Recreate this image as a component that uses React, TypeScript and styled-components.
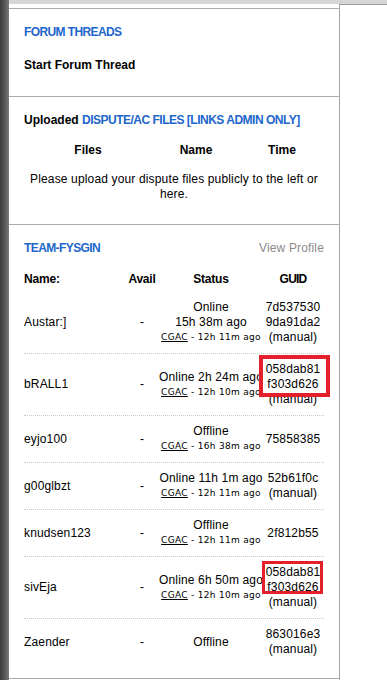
import styled, { createGlobalStyle } from 'styled-components';

const GlobalStyle = createGlobalStyle`
  body {
    margin: 0;
    background: #fff;
    font-family: 'Liberation Sans', Arial, sans-serif;
    font-size: 12px;
    letter-spacing: 0.15px;
    color: #000;
  }
`;

type Member = {
  name: string;
  status: string[];
  cgac?: string;
  guid: string[];
  marked?: { t: number; r: number; b: number; l: number; w: number };
  manual?: boolean;
};

const members: Member[] = [
  { name: 'Austar:]', status: ['Online', '15h 38m ago'], cgac: '12h 11m ago', guid: ['7d537530', '9da91da2'], manual: true },
  {
    name: 'bRALL1',
    status: ['Online 2h 24m ago'],
    cgac: '12h 10m ago',
    guid: ['058dab81', 'f303d626'],
    manual: true,
    marked: { t: 7, r: 10, b: 5, l: 7, w: 4 },
  },
  { name: 'eyjo100', status: ['Offline'], cgac: '16h 38m ago', guid: ['75858385'] },
  { name: 'g00glbzt', status: ['Online 11h 1m ago'], cgac: '12h 11m ago', guid: ['52b61f0c'], manual: true },
  { name: 'knudsen123', status: ['Offline'], cgac: '12h 11m ago', guid: ['2f812b55'] },
  {
    name: 'sivEja',
    status: ['Online 6h 50m ago'],
    cgac: '12h 10m ago',
    guid: ['058dab81', 'f303d626'],
    manual: true,
    marked: { t: 4, r: 3, b: -1, l: 4, w: 3 },
  },
  { name: 'Zaender', status: ['Offline'], guid: ['863016e3'], manual: true },
];

function App() {
  return (
    <Page>
      <GlobalStyle />
      <Strip />
      <Main>
        <TopBar />
        <Body>
          <PanelColumn>
            <Panel>
              <Section $pt={16} $pb={23}>
                <Title>FORUM THREADS</Title>
                <StartThread>Start Forum Thread</StartThread>
              </Section>

              <Section $pt={16} $pb={22}>
                <Heading>
                  Uploaded <Link>DISPUTE/AC FILES [LINKS ADMIN ONLY]</Link>
                </Heading>
                <FilesHead>
                  <span>Files</span>
                  <span>Name</span>
                  <span>Time</span>
                </FilesHead>
                <Notice>Please upload your dispute files publicly to the left or here.</Notice>
              </Section>

              <Section $pt={16} $pb={13} $last>
                <TeamBar>
                  <Title>TEAM-FYSGIN</Title>
                  <ViewProfile>View Profile</ViewProfile>
                </TeamBar>
                <HeadRow>
                  <NameCell>Name:</NameCell>
                  <Center>Avail</Center>
                  <Center>Status</Center>
                  <Center $caps>GUID</Center>
                </HeadRow>
                {members.map((m, i) => (
                  <Row key={m.name} $last={i === members.length - 1}>
                    <NameCell>{m.name}</NameCell>
                    <Center>-</Center>
                    <Stack>
                      {m.status.map((s) => (
                        <Line key={s}>{s}</Line>
                      ))}
                      {m.cgac && (
                        <Small>
                          <u>CGAC</u> - {m.cgac}
                        </Small>
                      )}
                    </Stack>
                    <Stack>
                      {m.marked ? (
                        <Mark $box={m.marked}>
                          {m.guid.map((g) => (
                            <Line key={g}>{g}</Line>
                          ))}
                        </Mark>
                      ) : (
                        m.guid.map((g) => <Line key={g}>{g}</Line>)
                      )}
                      {m.manual && <Line>(manual)</Line>}
                    </Stack>
                  </Row>
                ))}
              </Section>
            </Panel>
          </PanelColumn>
          <Outside />
        </Body>
      </Main>
    </Page>
  );
}

export default App;

const Page = styled.div`
  display: flex;
  min-height: 680px;
`;

const Strip = styled.div`
  width: 9px;
  flex-shrink: 0;
  background: linear-gradient(to right, #3b3b3b, #5a5a5a 60%, #7c7c7c);
`;

const Main = styled.div`
  flex: 1;
  display: flex;
  flex-direction: column;
`;

const TopBar = styled.div`
  height: 4px;
  background: #d6d6d6;
`;

const Body = styled.div`
  display: flex;
  flex: 1;
`;

const PanelColumn = styled.div`
  width: 330px;
  padding-top: 4px;
  border-right: 1px solid #a4a4a4;
`;

const Outside = styled.div`
  flex: 1;
  border-top: 1px solid #9a9a9a;
`;

const Panel = styled.div`
  border-top: 1px solid #ababab;
  border-bottom: 1px solid #ababab;
`;

const Section = styled.div<{ $pt: number; $pb: number; $last?: boolean }>`
  padding: ${(p) => p.$pt}px 15px ${(p) => p.$pb}px;
  border-bottom: ${(p) => (p.$last ? 'none' : '1px solid #ababab')};
  line-height: 15px;
`;

const Title = styled.div`
  font-weight: bold;
  letter-spacing: -0.6px;
  color: #2266cc;
`;

const StartThread = styled.div`
  margin-top: 18px;
  font-weight: bold;
  letter-spacing: 0;
`;

const Heading = styled.div`
  font-weight: bold;
  letter-spacing: 0;
`;

const Link = styled.span`
  letter-spacing: -0.5px;
  color: #2266cc;
`;

const FilesHead = styled.div`
  display: grid;
  grid-template-columns: 128px 88px 84px;
  margin-top: 15px;
  font-weight: bold;
  letter-spacing: 0;
  text-align: center;
`;

const Notice = styled.div`
  margin-top: 14px;
  text-align: center;
`;

const TeamBar = styled.div`
  display: flex;
  justify-content: space-between;
`;

const ViewProfile = styled.span`
  color: #8a8a8a;
`;

const Grid = styled.div`
  display: grid;
  grid-template-columns: 100px 36px 102px 62px;
  align-items: center;
`;

const HeadRow = styled(Grid)`
  margin-top: 16px;
  padding-bottom: 5px;
  font-weight: bold;
  letter-spacing: -0.2px;
`;

const Row = styled(Grid)<{ $last?: boolean }>`
  padding: 8px 0;
  border-bottom: ${(p) => (p.$last ? 'none' : '1px dotted #c8c8c8')};
`;

const NameCell = styled.div`
  white-space: nowrap;
`;

const Center = styled.div<{ $caps?: boolean }>`
  text-align: center;
  letter-spacing: ${(p) => (p.$caps ? '-0.8px' : 'inherit')};
`;

const Stack = styled.div`
  display: flex;
  flex-direction: column;
  align-items: center;
`;

const Line = styled.div`
  white-space: nowrap;
`;

const Small = styled.div`
  white-space: nowrap;
  font-family: 'DejaVu Sans', Verdana, sans-serif;
  font-size: 9px;
  letter-spacing: 0.3px;

  u {
    text-underline-offset: 1px;
  }
`;

const Mark = styled.div<{ $box: { t: number; r: number; b: number; l: number; w: number } }>`
  position: relative;
  z-index: 0;
  display: flex;
  flex-direction: column;
  align-items: center;

  &::before {
    content: '';
    position: absolute;
    z-index: -1;
    top: ${(p) => -p.$box.t}px;
    right: ${(p) => -p.$box.r}px;
    bottom: ${(p) => -p.$box.b}px;
    left: ${(p) => -p.$box.l}px;
    border: ${(p) => p.$box.w}px solid #e4212a;
    background: #fff;
  }
`;
